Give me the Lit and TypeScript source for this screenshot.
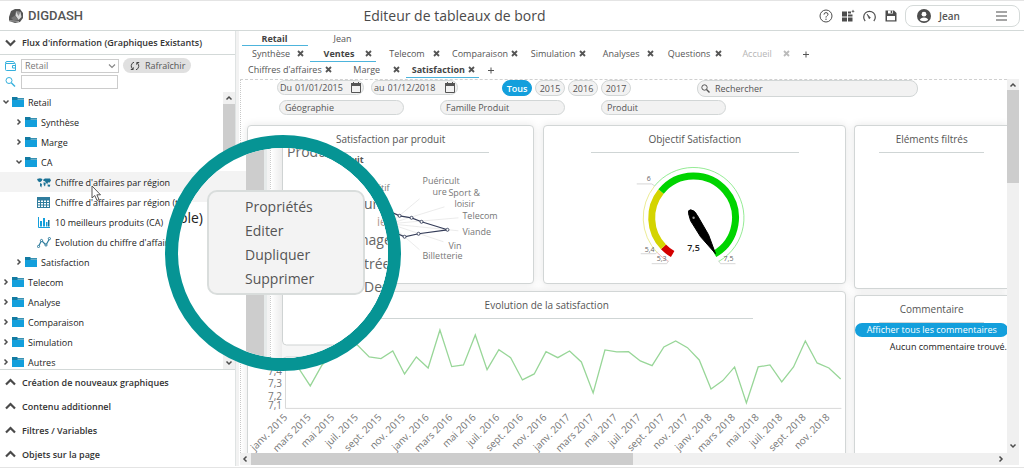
import { LitElement, html, svg, css } from "lit";
import { customElement } from "lit/decorators.js";
import { classMap } from "lit/directives/class-map.js";

const reset = css`
  :host, * { box-sizing: border-box; }
  button, input, select {
    font: inherit; color: inherit; background: none; border: 0; padding: 0; margin: 0; outline: 0;
  }
  button { cursor: pointer; }
  svg { display: block; flex: none; }
  svg text { font-family: "Open Sans", "Noto Sans", sans-serif; }
`;

const up = svg`<path d="M1.5 5.5 L4 3 L6.5 5.5" fill="none" stroke="#4d4d4d" stroke-width="1.5"/>`;
const down = svg`<path d="M1.5 2.5 L4 5 L6.5 2.5" fill="none" stroke="#4d4d4d" stroke-width="1.5"/>`;
const left = svg`<path d="M5.5 1.5 L3 4 L5.5 6.5" fill="none" stroke="#4d4d4d" stroke-width="1.5"/>`;
const right = svg`<path d="M2.5 1.5 L5 4 L2.5 6.5" fill="none" stroke="#4d4d4d" stroke-width="1.5"/>`;
const glyph = (shape: unknown) => html`<svg width="8" height="8" viewBox="0 0 8 8" aria-hidden="true">${shape}</svg>`;

/* ---------- Header ---------- */

@customElement("dd-header")
class DdHeader extends LitElement {
  static styles = [reset, css`
    :host { display: block; border-top: 1px solid #e4e4e4; border-bottom: 1px solid #d3d9d8; background: #fff; }
    .bar { display: flex; align-items: center; height: 29px; padding: 0 4px 0 8px; }
    .brand { display: flex; align-items: center; gap: 4px; color: #555; font: 500 13px Roboto, sans-serif; width: 82px; }
    h1 { flex: 1; margin: 0; text-align: center; font-size: 14px; font-weight: 500; color: #4a4a4a; }
    .tools { display: flex; gap: 8px; margin-right: 7px; color: #4d4d4d; }
    .user { display: flex; align-items: center; width: 115px; height: 22px; padding: 0 12px 0 11px;
      border: 1px solid #d5dad9; border-radius: 8px; font-size: 10px; font-weight: 600; color: #555; }
    .user span { flex: 1; text-align: left; padding-left: 8px; }
  `];
  render() {
    return html`
      <header class="bar">
        <div class="brand">
          <svg width="16" height="16" viewBox="0 0 16 16" aria-hidden="true">
            <path d="M7 1 L12 1 L15 5 L15 10 L12 14 L7 15 L1 13 L1 9 L3 3 Z" fill="#555"/>
            <path d="M8 3.500 L12.500 4 L13.500 9 L10.500 12 L7.500 7.500 Z" fill="#d9d9d9"/>
            <path d="M8 3.500 L12.500 4 L10.500 8 Z" fill="#8a8a8a"/>
            <path d="M3 10 L7 7.500 L10.500 12 L5 12 Z" fill="#777"/>
            <path d="M1 12.800 L6 13 L11 13.500" stroke="#bbb" stroke-width=".8" fill="none"/>
          </svg>
          <span>DIGDASH</span>
        </div>
        <h1>Editeur de tableaux de bord</h1>
        <div class="tools">
          <button aria-label="Aide">
            <svg width="14" height="14" viewBox="0 0 14 14"><circle cx="7" cy="7" r="6" fill="none" stroke="currentColor"/>
              <path d="M5 5.600 Q5 3.600 7 3.600 Q9 3.600 9 5.300 Q9 6.300 7.900 6.900 Q7 7.400 7 8.600" fill="none" stroke="currentColor"/>
              <circle cx="7" cy="10.300" r=".7" fill="currentColor"/></svg>
          </button>
          <button aria-label="Tableaux de bord">
            <svg width="14" height="14" viewBox="0 0 14 14" fill="currentColor"><path d="M1 2.500h5v5H1zM1 8.500h5v4H1zM7 2.500h3v2H7zM7 5.500h4.500v2H7zM7 8.500h4.500v4H7z"/>
              <path d="M12 .5l.5 1.300 1.300.5-1.300.5-.5 1.300-.5-1.300-1.300-.5 1.300-.5z"/></svg>
          </button>
          <button aria-label="Performance">
            <svg width="13" height="14" viewBox="0 0 13 14"><path d="M2.200 12 A5.800 5.800 0 1 1 10.800 12" fill="none" stroke="currentColor" stroke-width="1.200"/>
              <path d="M4 5 L7.400 8.800 L6.200 9.800 Z" fill="currentColor" stroke="currentColor" stroke-width=".6"/></svg>
          </button>
          <button aria-label="Enregistrer">
            <svg width="14" height="14" viewBox="0 0 14 14"><path d="M1.500 1.500 H10 L12.500 4 V12.500 H1.500 Z" fill="currentColor"/>
              <path d="M4 1.500h5v3H4z" fill="#fff"/><path d="M6.700 1.800h1.500v2.200H6.700z" fill="currentColor"/><path d="M3 7h8v4.300H3z" fill="#fff"/></svg>
          </button>
        </div>
        <button class="user">
          <svg width="14" height="14" viewBox="0 0 14 14" aria-hidden="true"><circle cx="7" cy="7" r="7" fill="#4d4d4d"/><circle cx="7" cy="5.200" r="2.400" fill="#fff"/>
            <path d="M2.800 11 Q3.500 8.500 7 8.500 Q10.500 8.500 11.200 11 Q7 13.500 2.800 11Z" fill="#fff"/></svg>
          <span>Jean</span>
          <svg width="11" height="10" viewBox="0 0 11 10" aria-hidden="true"><path d="M0 1h11M0 5h11M0 9h11" stroke="#4d4d4d" stroke-width="1.200"/></svg>
        </button>
      </header>`;
  }
}

/* ---------- Sidebar ---------- */

type Node = { label: string; level: number; kind: "open" | "closed" | "map" | "table" | "bars" | "line"; hover?: boolean };

const nodes: Node[] = [
  { label: "Retail", level: 0, kind: "open" },
  { label: "Synthèse", level: 1, kind: "closed" },
  { label: "Marge", level: 1, kind: "closed" },
  { label: "CA", level: 1, kind: "open" },
  { label: "Chiffre d'affaires par région", level: 2, kind: "map", hover: true },
  { label: "Chiffre d'affaires par région (table)", level: 2, kind: "table" },
  { label: "10 meilleurs produits (CA)", level: 2, kind: "bars" },
  { label: "Evolution du chiffre d'affaires", level: 2, kind: "line" },
  { label: "Satisfaction", level: 1, kind: "closed" },
  { label: "Telecom", level: 0, kind: "closed" },
  { label: "Analyse", level: 0, kind: "closed" },
  { label: "Comparaison", level: 0, kind: "closed" },
  { label: "Simulation", level: 0, kind: "closed" },
  { label: "Autres", level: 0, kind: "closed" },
];

const nodeIcons = {
  folder: svg`<path d="M0 1h5l1 1h6v2H0z" fill="#127ba3"/><path d="M0 4h12v7H0z" fill="#139fdc"/><path d="M5.500 3.200h6.500" stroke="#bfe6f6" stroke-width=".7"/>`,
  map: svg`<path d="M0 2l3-.7 2.500.7-.8 2L3 5.300 1 4.300zM3 6l2 .9-.6 3.500L3 9zM6.500 2.300L8 1.500l5 0 1 2-1.600 2.300-1.400-.5-.6 1.700-1.500-1L8 4.300 6.300 4zM6.500 5.300l2.300.6-.8 3.500-1.300-1.500zM10.500 7.500l2.800.3-.5 2-2-.4z" fill="#1b7396"/>`,
  table: svg`<path d="M0 0h13v11H0z" fill="#2f7c9d"/><path d="M1 3.500h2v1.500H1zM4 3.500h2v1.500H4zM7 3.500h2v1.500H7zM10 3.500h2v1.500h-2zM1 6h2v1.500H1zM4 6h2v1.500H4zM7 6h2v1.500H7zM10 6h2v1.500h-2zM1 8.500h2V10H1zM4 8.500h2V10H4zM7 8.500h2V10H7zM10 8.500h2V10h-2z" fill="#fff"/>`,
  bars: svg`<path d="M1.500 0v10.500H13" fill="none" stroke="#139fdc"/><path d="M3 4h2v5.500H3zM6 1h2v8.500H6zM9 5h1.500v4.500H9z" fill="#139fdc"/><path d="M11 3h1.500v6.500H11z" fill="#1b7396"/>`,
  line: svg`<path d="M1.500 9.500L4.500 3.500 9 8 12.500 1.800" fill="none" stroke="#2f7c9d" stroke-width="1.200"/><g fill="#fff" stroke="#2f7c9d"><circle cx="1.500" cy="9.500" r="1.100"/><circle cx="4.500" cy="3.500" r="1.100"/><circle cx="9" cy="8" r="1.100"/><circle cx="12.400" cy="1.600" r="1.100"/></g>`,
};

@customElement("dd-sidebar")
class DdSidebar extends LitElement {
  static styles = [reset, css`
    :host { display: flex; flex-direction: column; width: 235px; flex: none; min-height: 0; background: #fff; font-size: 9px; color: #222; }
    .head { display: flex; align-items: center; gap: 6px; width: 100%; height: 24px; padding: 0 6px 0 5px; flex: none;
      font-size: 9px; font-weight: 600; color: #333; text-align: left; }
    .main { border-bottom: 1px solid #d3d9d8; }
    .form { display: grid; grid-template-columns: 12px 98px auto; column-gap: 4px; row-gap: 2px; align-items: center; justify-content: start;
      padding: 3px 5px 3px 5px; color: #777; }
    select { appearance: none; width: 100%; height: 14px; border: 1px solid #ccc; padding: 0 3px; font-size: 9px; line-height: 12px; background: #fff; }
    .pick { display: grid; align-items: center; }
    .pick > * { grid-area: 1 / 1; }
    .pick svg { justify-self: end; margin-right: 3px; pointer-events: none; }
    .find { width: 97px; height: 14px; border: 1px solid #ccc; }
    .refresh { display: flex; align-items: center; gap: 5px; height: 15px; padding: 0 6px 0 7px; border-radius: 8px; background: #e0e0e0; color: #555; }
    .scroll { display: flex; flex: 1; min-height: 0; overflow: hidden; border-bottom: 1px solid #d3d9d8; }
    .tree { flex: 1; min-width: 0; margin: 0; padding: 0; list-style: none; }
    .row { display: flex; align-items: center; width: 100%; height: 20px; gap: 2px; padding-left: 2px; white-space: nowrap; overflow: hidden; text-align: left; }
    .level1 { padding-left: 15px; }
    .level2 { padding-left: 37px; }
    .row span { padding-left: 2px; }
    .hover { background: #f3f3f3; }
    .track { display: flex; flex-direction: column; align-items: center; width: 12px; padding: 2px 0; gap: 2px; background: #f0f0f0; }
    .thumb { width: 100%; height: 204px; background: #cdcdcd; }
    .push { flex: 1; }
  `];

  icon(n: Node) {
    if (n.kind === "open" || n.kind === "closed")
      return html`${glyph(n.kind === "open" ? down : right)}<svg width="12" height="12" viewBox="0 0 12 12" aria-hidden="true">${nodeIcons.folder}</svg>`;
    return html`<svg width="14" height="11" viewBox="0 0 14 11" aria-hidden="true">${nodeIcons[n.kind]}</svg>`;
  }

  render() {
    const chevron = (d: string) => html`<svg width="11" height="8" viewBox="0 0 11 8" aria-hidden="true"><path d=${d} fill="none" stroke="#4a4a4a" stroke-width="2.200"/></svg>`;
    return html`
      <button class="head main">${chevron("M1 1.500 L5.500 6 L10 1.500")}<span>Flux d'information (Graphiques Existants)</span></button>
      <div class="form">
        <svg width="12" height="12" viewBox="0 0 12 12" fill="none" stroke="#35b0dd" aria-hidden="true"><path d="M.5 3 Q.5 1.500 2 1.500 H8.500 L10 3.500 M.5 3.500 H9.500 Q10.500 3.500 10.500 4.500 V10.500 H1.500 Q.5 10.500 .5 9.500 Z M10.500 5.500 H7.500 V8 H10.500"/></svg>
        <div class="pick">
          <select aria-label="Rôle"><option>Retail</option></select>
          <svg width="8" height="8" viewBox="0 0 8 8" aria-hidden="true"><path d="M1 2.500 L4 5.500 L7 2.500" fill="none" stroke="#888" stroke-width="1.200"/></svg>
        </div>
        <button class="refresh">
          <svg width="10" height="10" viewBox="0 0 10 10" fill="none" stroke="#444" aria-hidden="true"><path d="M2.800 8.200 A4 4 0 0 1 4 1.200 M7.200 1.800 A4 4 0 0 1 6 8.800 M.8 8.500 H3.200 V6.200 M9.200 1.500 H6.800 V3.800"/></svg>
          Rafraîchir
        </button>
        <svg width="12" height="12" viewBox="0 0 12 12" fill="none" stroke="#35b0dd" aria-hidden="true"><circle cx="4" cy="4.500" r="3"/><path d="M6.300 6.800 L10 10.500" stroke-width="1.400"/></svg>
        <input class="find" type="text" aria-label="Filtrer les flux">
      </div>
      <div class="scroll">
        <ul class="tree">
          ${nodes.map((n) => html`<li><button class=${classMap({ row: true, hover: !!n.hover, [`level${n.level}`]: true })}>${this.icon(n)}<span>${n.label}</span></button></li>`)}
        </ul>
        <div class="track">${glyph(up)}<div class="thumb"></div><div class="push"></div>${glyph(down)}</div>
      </div>
      ${["Création de nouveaux graphiques", "Contenu additionnel", "Filtres / Variables", "Objets sur la page"].map((t) => html`
        <button class="head">${chevron("M1 6.500 L5.500 2 L10 6.500")}<span>${t}</span></button>`)}
    `;
  }
}

/* ---------- Tabs ---------- */

@customElement("dd-tabs")
class DdTabs extends LitElement {
  static styles = [reset, css`
    :host { display: block; padding: 0 2px 1px; font-size: 9px; color: #555; }
    .line { display: flex; gap: 2px; height: 16px; }
    .line:first-child { height: 15px; }
    .tab { display: flex; align-items: center; min-width: 66px; padding: 0 4px 0 6px; border-bottom: 1px solid transparent; }
    .label { flex: 1; text-align: center; white-space: nowrap; padding-right: 3px; }
    .on { border-bottom-color: #4db4dc; font-weight: 700; color: #444; }
    .off { color: #b5b5b5; }
    .add { width: 22px; color: #444; }
    .x { display: grid; place-items: center; }
  `];
  render() {
    const cross = (c: string) => html`<svg width="7" height="7" viewBox="0 0 7 7"><path d="M1 1 L6 6 M6 1 L1 6" stroke=${c} stroke-width="1.800"/></svg>`;
    const tab = (t: string, state = "", close = true) => html`
      <div class=${classMap({ tab: true, on: state === "on", off: state === "off" })}>
        <button class="label">${t}</button>
        ${close ? html`<button class="x" aria-label=${`Fermer ${t}`}>${cross(state === "off" ? "#bbb" : "#555")}</button>` : ""}
      </div>`;
    const add = html`<button class="add" aria-label="Ajouter"><svg width="22" height="7" viewBox="0 0 22 7"><path d="M7 3.500h6M10 .5v6" stroke="#555"/></svg></button>`;
    return html`
      <nav class="line">${tab("Retail", "on", false)}${tab("Jean", "", false)}</nav>
      <nav class="line">${tab("Synthèse")}${tab("Ventes", "on")}${tab("Telecom")}${tab("Comparaison")}${tab("Simulation")}${tab("Analyses")}${tab("Questions")}${tab("Accueil", "off")}${add}</nav>
      <nav class="line">${tab("Chiffres d'affaires")}${tab("Marge")}${tab("Satisfaction", "on")}${add}</nav>`;
  }
}

/* ---------- Board ---------- */

const values = [362, 368, 386, 365, 352, 340, 345, 357, 358.700, 351, 374, 357, 368, 330, 366.700, 365, 335, 369.700, 349.700, 357.700, 380, 374, 351.700, 357.700,
  351, 362, 393, 350, 352, 351.700, 361, 365.700, 347, 341, 347.700, 360, 389, 380.700, 367, 403, 367, 365, 382, 367, 341, 363, 368, 379];
const step = 11.8;
const months = [2015, 2016, 2017, 2018].flatMap((y) => ["janv.", "mars", "mai", "juil.", "sept.", "nov."].map((m) => `${m} ${y}`));

const polar = (deg: number, r: number) => {
  const a = (deg * Math.PI) / 180;
  return `${(694 - r * Math.sin(a)).toFixed(2)} ${(218 + r * Math.cos(a)).toFixed(2)}`;
};
const arc = (from: number, to: number, r: number, color: string, width: number) =>
  svg`<path d=${`M${polar(from, r)} A${r} ${r} 0 ${to - from > 180 ? 1 : 0} 1 ${polar(to, r)}`} fill="none" stroke=${color} stroke-width=${width}/>`;

@customElement("dd-board")
class DdBoard extends LitElement {
  static styles = [reset, css`
    :host { display: block; flex: 1; min-width: 0; overflow: hidden; border-top: 1px dashed #d0d0d0; border-left: 1px dotted #c8c8c8; font-size: 9px; color: #555; }
    .filters { display: flex; align-items: start; padding-left: 36px; height: 20px; }
    .pill { display: flex; align-items: center; height: 15px; border: 1px solid #d2d6d6; border-radius: 8px; background: #f2f2f2; }
    .date { width: 87px; padding: 0 2px 0 2px; margin-right: 7px; gap: 3px; }
    .date input { width: 0; flex: 1; }
    .years { display: flex; gap: 3px; margin-left: 37px; }
    .years button { height: 16px; width: 30px; border: 1px solid #d2d6d6; border-radius: 8px; background: #f2f2f2; }
    .years .all { background: #139fdc; border-color: #139fdc; color: #fff; font-weight: 600; }
    .search { flex: 0 1 221px; height: 17px; margin-left: 66px; padding-left: 3px; gap: 5px; }
    .search input { flex: 1; min-width: 0; color: #555; }
    .search input::placeholder { color: #555; opacity: 1; }
    .lists { display: flex; gap: 36px; padding-left: 38px; }
    .lists button { width: 125px; padding-left: 5px; }
    .cards { display: grid; grid-template-columns: minmax(0, 601fr) minmax(0, 154fr); gap: 8px; padding: 10px 0 0 6px; margin-right: -1px; }
    .side { display: flex; flex-direction: column; gap: 6px; }
    .wide { display: grid; grid-template-columns: minmax(0, 288fr) minmax(0, 304fr); gap: 7px 9px; align-content: start; }
    .card { border: 1px solid #d2d6d6; border-radius: 4px; background: #fff; box-shadow: 0 0 8px rgba(0, 0, 0, .1); overflow: hidden; }
    .span { grid-column: 1 / -1; }
    .title { margin: 0 auto; text-align: center; font-size: 10px; font-weight: 400; line-height: 26px; height: 27px; border-bottom: 1px solid #cfd5d5; color: #555; width: 69%; }
    .elements { height: 164px; }
    .comments { height: 180px; text-align: right; font-size: 9px; color: #222; }
    .comments p { margin: 0 1px 0 0; }
    .all-comments { display: block; width: 100%; height: 14px; border-radius: 8px; background: #139fdc; color: #fff; font-weight: 500; font-size: 9px; line-height: 14px; margin-bottom: 3px; }
    .elements, .comments { border-right: 0; border-radius: 4px 0 0 4px; }
    .plot { width: 100%; height: auto; }
  `];

  radar() {
    const ends = [[419, 199], [444, 207], [458, 218], [458, 231], [443, 242], [419, 250], [365, 199], [345, 212], [345, 235], [365, 250]];
    const dots = [[399, 216], [411, 218], [421, 222], [447, 230], [418, 234], [404, 237]];
    return html`<svg class="plot" viewBox="247 153 286 130" role="img" aria-label="Satisfaction par produit">
      ${ends.map(([x, y]) => svg`<path d=${`M389 224 L${x} ${y}`} stroke="#e6e6e6" stroke-width=".8"/>`)}
      <path d="M370 218 L388 211 L399 216 L411 218 L421 222 L447 230 L418 234 L404 237 L386 229 Z" fill="none" stroke="#343c58" stroke-width="1.200"/>
      ${dots.map(([x, y]) => svg`<circle cx=${x} cy=${y} r="1.500" fill="#fff" stroke="#343c58" stroke-width=".9"/>`)}
      <text x="363" y="163" text-anchor="end" font-size="9" font-weight="700" fill="#555">Produit</text>
      <g font-size="9" fill="#777">
        <text x="389" y="191" text-anchor="end">Apéritif</text>
        <text x="422" y="184">Puéricult</text><text x="432" y="195">ure</text>
        <text x="448" y="196">Sport &amp;</text><text x="454" y="207">loisir</text>
        <text x="462" y="219">Telecom</text><text x="462" y="235">Viande</text>
        <text x="448" y="249">Vin</text><text x="422" y="259">Billetterie</text>
      </g>
    </svg>`;
  }

  gauge() {
    return html`<svg class="plot" viewBox="544 153 302 130" role="img" aria-label="Objectif Satisfaction">
      ${arc(30, 46, 42, "#d40000", 7)}${arc(46, 129, 42, "#d4d400", 7)}${arc(129, 330, 42, "#00d400", 7)}
      ${arc(30, 46, 50.5, "#f0a0a0", 0.8)}${arc(46, 129, 50.5, "#e6e67a", 0.8)}${arc(129, 330, 50.5, "#7ae67a", 0.8)}
      <path d="M637 184 H652 L655 186 M641 254 H656 L658 252 M652 264 H667 L669 261 M736 264 H721 L719 261" fill="none" stroke="#ccc" stroke-width=".8"/>
      <path d="M689 214 Q688 210 691 210 Q695 210 698 216 L709 235 L716 254 L701 237 L691 221 Z" fill="#000" stroke="#000"/>
      <circle cx="694" cy="218" r="1.200" fill="#999"/>
      <text x="694" y="251" text-anchor="middle" font-size="9" font-weight="600" fill="#222">7,5</text>
      <g font-size="7" fill="#666" text-anchor="middle"><text x="649" y="181">6</text><text x="650" y="252">5,4</text><text x="662" y="261">5,3</text><text x="729" y="261">7,5</text></g>
    </svg>`;
  }

  trend() {
    const points = values.map((y, i) => `${(285.7 + i * step).toFixed(1)},${y}`).join(" ");
    const scale: [string, number][] = [["7,4", 375], ["7,3", 387], ["7,2", 400], ["7,1", 409]];
    return html`<svg class="plot" viewBox="247 319 598 160" role="img" aria-label="Evolution de la satisfaction">
      <path d="M284.500 325 V408.500 H841" fill="none" stroke="#d8d8d8"/>
      <polyline points=${points} fill="none" stroke="#98d698" stroke-width="1.300"/>
      <g font-size="10" fill="#777">
        ${scale.map(([t, y]) => svg`<text x="281" y=${y} text-anchor="end">${t}</text>`)}
        ${months.map((m, i) => svg`<text transform=${`translate(${(287 + i * step * 2).toFixed(1)} 418) rotate(-45)`} text-anchor="end">${m}</text>`)}
      </g>
    </svg>`;
  }

  render() {
    const date = (label: string, v: string) => html`<label class="pill date">${label}<input type="text" .value=${v}>
      <svg width="10" height="11" viewBox="0 0 10 11" aria-hidden="true"><path d="M.5 1.500h9v9h-9z" fill="none" stroke="#555"/><path d="M0 1h10v3H0zM2 0h1v1h-1zM7 0h1v1h-1z" fill="#555"/></svg></label>`;
    return html`
      <div class="filters">
        ${date("Du", "01/01/2015")}${date("au", "01/12/2018")}
        <div class="years"><button class="all">Tous</button><button>2015</button><button>2016</button><button>2017</button></div>
        <label class="pill search">
          <svg width="9" height="9" viewBox="0 0 9 9" fill="none" stroke="#555" aria-hidden="true"><circle cx="3.500" cy="3.500" r="2.700"/><path d="M5.500 5.500 L8.500 8.500" stroke-width="1.400"/></svg>
          <input type="text" placeholder="Rechercher" aria-label="Rechercher">
        </label>
      </div>
      <div class="lists">
        <button class="pill">Géographie</button><button class="pill">Famille Produit</button><button class="pill">Produit</button>
      </div>
      <div class="cards">
        <div class="wide">
          <section class="card"><h2 class="title">Satisfaction par produit</h2>${this.radar()}</section>
          <section class="card"><h2 class="title">Objectif Satisfaction</h2>${this.gauge()}</section>
          <section class="card span"><h2 class="title">Evolution de la satisfaction</h2>${this.trend()}</section>
        </div>
        <div class="side">
          <section class="card elements"><h2 class="title">Eléments filtrés</h2></section>
          <section class="card comments"><h2 class="title">Commentaire</h2><button class="all-comments">Afficher tous les commentaires</button><p>Aucun commentaire trouvé.</p></section>
        </div>
      </div>`;
  }
}

/* ---------- Magnifier with context menu ---------- */

@customElement("dd-lens")
class DdLens extends LitElement {
  static styles = [reset, css`
    :host { display: block; width: 236px; height: 236px; border: 13px solid #069494; border-radius: 50%; overflow: hidden; background: #fff; }
    .scene { width: 210px; height: 210px; }
    .menu { position: absolute; left: 29px; top: 42px; width: 158px; margin: 0; padding: 3px 0 2px; list-style: none;
      background: #f3f3f3; border: 2px solid #d9dddc; border-radius: 10px; font-size: 14px; color: #555; }
    .menu button { display: block; width: 100%; height: 24px; padding-left: 36px; text-align: left; line-height: 24px; }
  `];
  render() {
    return html`
      <svg class="scene" viewBox="178 148 210 210" aria-hidden="true">
        <defs><linearGradient id="shade"><stop offset="0" stop-color="#fff"/><stop offset="1" stop-color="#ececec"/></linearGradient></defs>
        <path d="M178 171h68v31h-68z" fill="#f3f3f3"/>
        <path d="M246 148h18v210h-18z" fill="#cdcdcd"/>
        <path d="M264 148h3v210h-3z" fill="#e6eaea"/><path d="M267 148h3v210h-3z" fill="#f3f3f3"/>
        <path d="M271 148h117v210H271z" fill="#f6f6f6"/><path d="M271 148h11v210h-11z" fill="url(#shade)"/>
        <path d="M270.500 148v210" stroke="#ccc" stroke-dasharray="1 1"/>
        <rect x="282.500" y="100" width="160" height="245" rx="4" fill="#fff" stroke="#cfd3d3"/>
        <rect x="282.500" y="357" width="160" height="60" rx="4" fill="#fff" stroke="#cfd3d3"/>
        <text x="203" y="223" text-anchor="end" font-size="14" fill="#222">(table)</text>
        <g font-size="14" fill="#666">
          <text x="287" y="157">Produit</text><text x="364" y="209">ur</text><text x="360" y="245">nager</text>
          <text x="364" y="269">trée</text><text x="364" y="292">Dessert</text>
        </g>
        <text x="377" y="226" font-size="12" fill="#b39a90">ié</text>
      </svg>
      <ul class="menu">
        <li><button>Propriétés</button></li><li><button>Editer</button></li><li><button>Dupliquer</button></li><li><button>Supprimer</button></li>
      </ul>`;
  }
}

@customElement("app-root")
class AppRoot extends LitElement {
  static styles = [reset, css`
    :host { display: flex; flex-direction: column; position: relative; height: 100vh; padding-bottom: 2px; background: #fff; overflow: hidden;
      font-family: "Open Sans", "Noto Sans", sans-serif; }
    .body { display: flex; flex: 1; min-height: 0; padding-bottom: 1px; border-bottom: 1px solid #e4e4e4; }
    .split { width: 4px; background: #f2f2f2; border-left: 1px solid #dfe3e3; }
    .work { display: flex; flex-direction: column; flex: 1; min-width: 0; padding: 0 5px 1px 1px; }
    .view { display: flex; flex: 1; min-height: 0; }
    .vbar { display: flex; flex-direction: column; align-items: center; width: 12px; padding: 2px 0 3px; gap: 1px; background: #f0f0f0; }
    .vbar i { width: 100%; height: 93px; background: #cdcdcd; }
    .hbar { display: flex; align-items: center; height: 12px; padding: 0 14px 0 1px; gap: 2px; background: #f0f0f0; }
    .hbar i { width: 50%; height: 100%; background: #cdcdcd; }
    .push { flex: 1; }
    dd-lens { position: absolute; left: 165px; top: 135px; }
    .cursor { position: absolute; left: 91px; top: 185px; }
  `];
  render() {
    return html`
      <dd-header></dd-header>
      <div class="body">
        <dd-sidebar></dd-sidebar>
        <div class="split"></div>
        <main class="work">
          <dd-tabs></dd-tabs>
          <div class="view"><dd-board></dd-board><div class="vbar">${glyph(up)}<i></i><div class="push"></div>${glyph(down)}</div></div>
          <div class="hbar">${glyph(left)}<i></i><div class="push"></div>${glyph(right)}</div>
        </main>
      </div>
      <svg class="cursor" width="11" height="17" viewBox="0 0 11 17" aria-hidden="true"><path d="M1 1 V13 L3.800 10.500 L6 15.500 L8 14.500 L5.900 9.800 H9.500 Z" fill="#fff" stroke="#444" stroke-width=".9"/></svg>
      <dd-lens></dd-lens>`;
  }
}
